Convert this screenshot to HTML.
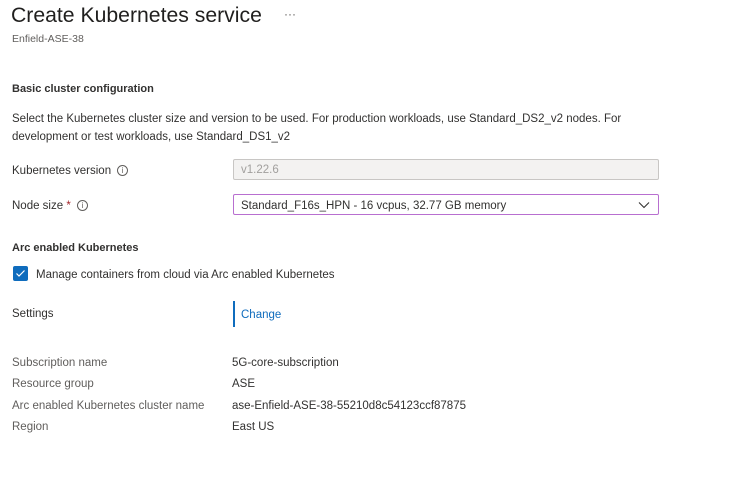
<!DOCTYPE html>
<html><head><style>
body{margin:0;width:752px;height:486px;background:#fff;font-family:"Liberation Sans",sans-serif;color:#323130;position:relative;overflow:hidden}
.a{position:absolute;white-space:nowrap;font-size:11.5px}
.info{display:inline-block;width:9px;height:9px;border:1px solid #605e5c;border-radius:50%;font-size:8px;line-height:9px;text-align:center;vertical-align:1px;margin-left:6px;color:#605e5c}
</style></head><body>
<div class="a" style="left:11px;top:4px;font-size:21.2px;color:#201f1e">Create Kubernetes service</div>
<div class="a" style="left:284px;top:7px;font-size:12px;color:#605e5c">···</div>
<div class="a" style="left:12px;top:33px;font-size:10.5px;color:#605e5c">Enfield-ASE-38</div>
<div class="a" style="left:12px;top:83px;font-weight:bold;font-size:11px">Basic cluster configuration</div>
<div class="a" style="left:12px;top:113px">Select the Kubernetes cluster size and version to be used. For production workloads, use Standard_DS2_v2 nodes. For</div>
<div class="a" style="left:12px;top:131px">development or test workloads, use Standard_DS1_v2</div>
<div class="a" style="left:12px;top:165px">Kubernetes version<span class="info">i</span></div>
<div class="a" style="left:233px;top:159px;width:424px;height:19px;background:#f3f2f1;border:1px solid #c8c6c4;border-radius:2px"></div>
<div class="a" style="left:241px;top:164px;color:#a19f9d">v1.22.6</div>
<div class="a" style="left:12px;top:200px">Node size <span style="color:#a4262c">*</span><span class="info">i</span></div>
<div class="a" style="left:233px;top:194px;width:424px;height:19px;border:1px solid #b86fd0;border-radius:2px"></div>
<div class="a" style="left:241px;top:200px">Standard_F16s_HPN - 16 vcpus, 32.77 GB memory</div>
<svg class="a" style="left:638px;top:201px" width="12" height="8"><path d="M1 1.5L6 6.5L11 1.5" stroke="#323130" fill="none" stroke-width="1.1"/></svg>
<div class="a" style="left:12px;top:242px;font-weight:bold;font-size:11px">Arc enabled Kubernetes</div>
<div class="a" style="left:13px;top:266px;width:15px;height:15px;background:#0f6cbd;border-radius:2px"></div>
<svg class="a" style="left:15px;top:269px" width="11" height="9"><path d="M1.5 4.5L4 7L9.5 1.5" stroke="#fff" fill="none" stroke-width="1.2"/></svg>
<div class="a" style="left:36px;top:269px">Manage containers from cloud via Arc enabled Kubernetes</div>
<div class="a" style="left:12px;top:308px">Settings</div>
<div class="a" style="left:233px;top:301px;width:2px;height:26px;background:#0f6cbd"></div>
<div class="a" style="left:241px;top:309px;color:#0f6cbd">Change</div>
<div class="a" style="left:12px;top:357px;color:#605e5c">Subscription name</div>
<div class="a" style="left:232px;top:357px">5G-core-subscription</div>
<div class="a" style="left:12px;top:378px;color:#605e5c">Resource group</div>
<div class="a" style="left:232px;top:378px">ASE</div>
<div class="a" style="left:12px;top:400px;color:#605e5c">Arc enabled Kubernetes cluster name</div>
<div class="a" style="left:232px;top:400px">ase-Enfield-ASE-38-55210d8c54123ccf87875</div>
<div class="a" style="left:12px;top:421px;color:#605e5c">Region</div>
<div class="a" style="left:232px;top:421px">East US</div>
</body></html>
